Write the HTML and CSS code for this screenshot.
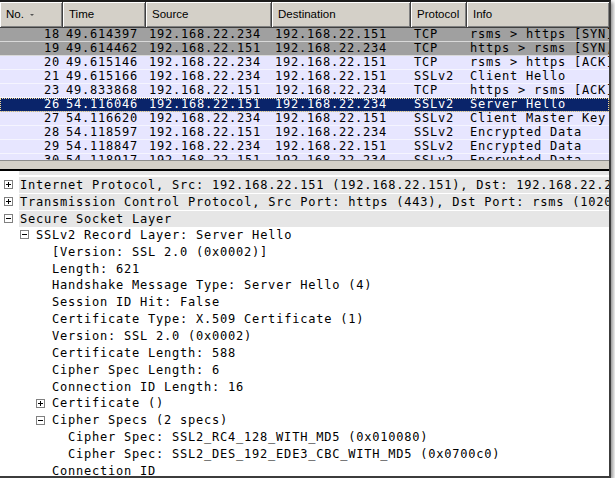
FILE: index.html
```html
<!DOCTYPE html>
<html lang="en">
<head>
    <meta charset="UTF-8">
    <title>Capture - SSLv2 Server Hello</title>
    <link rel="stylesheet" href="styles.css">
</head>
<body>
    <div class="capture">
        <div class="packet-list">
            <div class="list-head">
                <div class="hc">No. <span class="sort"></span></div>
                <div class="hc">Time</div>
                <div class="hc">Source</div>
                <div class="hc">Destination</div>
                <div class="hc">Protocol</div>
                <div class="hc">Info</div>
            </div>
            <div class="list-body">
                <div class="prow syn"><span class="num">18</span><span>49.614397</span><span>192.168.22.234</span><span>192.168.22.151</span><span>TCP</span><span>rsms &gt; https [SYN]</span></div>
                <div class="prow syn"><span class="num">19</span><span>49.614462</span><span>192.168.22.151</span><span>192.168.22.234</span><span>TCP</span><span>https &gt; rsms [SYN, ACK]</span></div>
                <div class="prow"><span class="num">20</span><span>49.615146</span><span>192.168.22.234</span><span>192.168.22.151</span><span>TCP</span><span>rsms &gt; https [ACK]</span></div>
                <div class="prow"><span class="num">21</span><span>49.615166</span><span>192.168.22.234</span><span>192.168.22.151</span><span>SSLv2</span><span>Client Hello</span></div>
                <div class="prow"><span class="num">23</span><span>49.833868</span><span>192.168.22.151</span><span>192.168.22.234</span><span>TCP</span><span>https &gt; rsms [ACK]</span></div>
                <div class="prow selected"><span class="num">26</span><span>54.116046</span><span>192.168.22.151</span><span>192.168.22.234</span><span>SSLv2</span><span>Server Hello</span></div>
                <div class="prow"><span class="num">27</span><span>54.116620</span><span>192.168.22.234</span><span>192.168.22.151</span><span>SSLv2</span><span>Client Master Key</span></div>
                <div class="prow"><span class="num">28</span><span>54.118597</span><span>192.168.22.151</span><span>192.168.22.234</span><span>SSLv2</span><span>Encrypted Data</span></div>
                <div class="prow"><span class="num">29</span><span>54.118847</span><span>192.168.22.234</span><span>192.168.22.151</span><span>SSLv2</span><span>Encrypted Data</span></div>
                <div class="prow"><span class="num">30</span><span>54.118917</span><span>192.168.22.151</span><span>192.168.22.234</span><span>SSLv2</span><span>Encrypted Data</span></div>
            </div>
        </div>

        <div class="splitter"></div>

        <div class="tree">
            <!-- bottom edge of the row scrolled above the view -->
            <div class="stub"></div>
            <div class="node l0 top">
                <svg class="tog" width="9" height="9"><rect x="0.5" y="0.5" width="8" height="8" fill="#fff" stroke="#808080"/><path d="M2 4.5h5M4.5 2v5" stroke="#000"/></svg>
                <span class="txt">Internet Protocol, Src: 192.168.22.151 (192.168.22.151), Dst: 192.168.22.234 (192.168.22.234)</span>
            </div>
            <div class="node l0 top">
                <svg class="tog" width="9" height="9"><rect x="0.5" y="0.5" width="8" height="8" fill="#fff" stroke="#808080"/><path d="M2 4.5h5M4.5 2v5" stroke="#000"/></svg>
                <span class="txt">Transmission Control Protocol, Src Port: https (443), Dst Port: rsms (1020), Seq: 1, Ack: 46, Len: 623</span>
            </div>
            <div class="node l0 top">
                <svg class="tog" width="9" height="9"><rect x="0.5" y="0.5" width="8" height="8" fill="#fff" stroke="#808080"/><path d="M2 4.5h5" stroke="#000"/></svg>
                <span class="txt">Secure Socket Layer</span>
            </div>
            <div class="node l1">
                <svg class="tog" width="9" height="9"><rect x="0.5" y="0.5" width="8" height="8" fill="#fff" stroke="#808080"/><path d="M2 4.5h5" stroke="#000"/></svg>
                <span class="txt">SSLv2 Record Layer: Server Hello</span>
            </div>
            <div class="node l2"><span class="tog"></span><span class="txt">[Version: SSL 2.0 (0x0002)]</span></div>
            <div class="node l2"><span class="tog"></span><span class="txt">Length: 621</span></div>
            <div class="node l2"><span class="tog"></span><span class="txt">Handshake Message Type: Server Hello (4)</span></div>
            <div class="node l2"><span class="tog"></span><span class="txt">Session ID Hit: False</span></div>
            <div class="node l2"><span class="tog"></span><span class="txt">Certificate Type: X.509 Certificate (1)</span></div>
            <div class="node l2"><span class="tog"></span><span class="txt">Version: SSL 2.0 (0x0002)</span></div>
            <div class="node l2"><span class="tog"></span><span class="txt">Certificate Length: 588</span></div>
            <div class="node l2"><span class="tog"></span><span class="txt">Cipher Spec Length: 6</span></div>
            <div class="node l2"><span class="tog"></span><span class="txt">Connection ID Length: 16</span></div>
            <div class="node l2">
                <svg class="tog" width="9" height="9"><rect x="0.5" y="0.5" width="8" height="8" fill="#fff" stroke="#808080"/><path d="M2 4.5h5M4.5 2v5" stroke="#000"/></svg>
                <span class="txt">Certificate ()</span>
            </div>
            <div class="node l2">
                <svg class="tog" width="9" height="9"><rect x="0.5" y="0.5" width="8" height="8" fill="#fff" stroke="#808080"/><path d="M2 4.5h5" stroke="#000"/></svg>
                <span class="txt">Cipher Specs (2 specs)</span>
            </div>
            <div class="node l3"><span class="tog"></span><span class="txt">Cipher Spec: SSL2_RC4_128_WITH_MD5 (0x010080)</span></div>
            <div class="node l3"><span class="tog"></span><span class="txt">Cipher Spec: SSL2_DES_192_EDE3_CBC_WITH_MD5 (0x0700c0)</span></div>
            <div class="node l2"><span class="tog"></span><span class="txt">Connection ID</span></div>
        </div>
    </div>
</body>
</html>
```

FILE: styles.css
```css
body {
    margin: 0;
    background: #fff;
    font-family: "DejaVu Sans Mono", monospace;
    color: #000;
}

.capture {
    width: 609px;
    height: 474px;
    border-top: 2px solid #1c1c1c;
    border-right: 2px solid #3c3c3c;
    border-bottom: 2px solid #3c3c3c;
    box-shadow: 2px 2px 4px rgba(0, 0, 0, 0.45);
    background: #fff;
    display: flex;
    flex-direction: column;
    overflow: hidden;
}

/* packet list */

.packet-list {
    flex: none;
}

.list-head,
.prow {
    display: grid;
    grid-template-columns: 63px 83px 126px 139px 56px 1fr;
}

.list-head {
    height: 25px;
    border-bottom: 1px solid #404040;
    background: #d4d0c8;
}

.hc {
    box-sizing: border-box;
    padding-left: 6px;
    border-right: 1px solid #404040;
    box-shadow: inset 1px 1px #fff, inset -1px -1px #808080;
    font: 11.5px "Liberation Sans", Arial, sans-serif;
    line-height: 25px;
    white-space: nowrap;
    overflow: hidden;
}

.hc:last-child {
    border-right: none;
}

.sort {
    display: inline-block;
    width: 0;
    height: 0;
    margin-left: 3px;
    vertical-align: middle;
    border-left: 2px solid transparent;
    border-right: 2px solid transparent;
    border-top: 2px solid #555;
}

.list-body {
    height: 132px;
    overflow: hidden;
    background: #fff;
}

.prow {
    height: 13px;
    line-height: 13px;
    border-bottom: 1px solid rgba(255, 255, 255, 0.6);
    background: #e7e6ff;
    font-size: 12px;
    letter-spacing: 0.78px;
    white-space: pre;
}

.prow span {
    overflow: hidden;
    padding-left: 3px;
}

.prow .num {
    text-align: right;
    padding: 0 3px 0 0;
}

.prow.syn {
    background: #a0a0a0;
}

.prow.selected {
    background: #0a246a;
    color: #fff;
    outline: 1px dotted #f5db95;
    outline-offset: -1px;
}

.splitter {
    flex: none;
    height: 8px;
    border-top: 1px solid #8c8c8c;
    border-bottom: 2px solid #000;
    background: #d4d0c8;
}

/* details tree */

.tree {
    flex: 1;
    overflow: hidden;
    font-size: 12px;
    letter-spacing: 0.78px;
}

.stub {
    height: 4px;
    margin: 0 0 1px 19px;
    background: #e6e6e6;
}

.node {
    height: 16.85px;
    display: flex;
    align-items: center;
    white-space: pre;
}

.l0 { padding-left: 4px; }
.l1 { padding-left: 20px; }
.l2 { padding-left: 36px; }
.l3 { padding-left: 52px; }

.tog {
    flex: none;
    display: block;
    width: 9px;
    height: 9px;
    margin-right: 7px;
}

.top .tog {
    margin-right: 6px;
}

.top .txt {
    flex: 1;
    height: 16px;
    line-height: 16px;
    margin-top: 1px;
    padding-left: 1px;
    background: #e6e6e6;
}
```
